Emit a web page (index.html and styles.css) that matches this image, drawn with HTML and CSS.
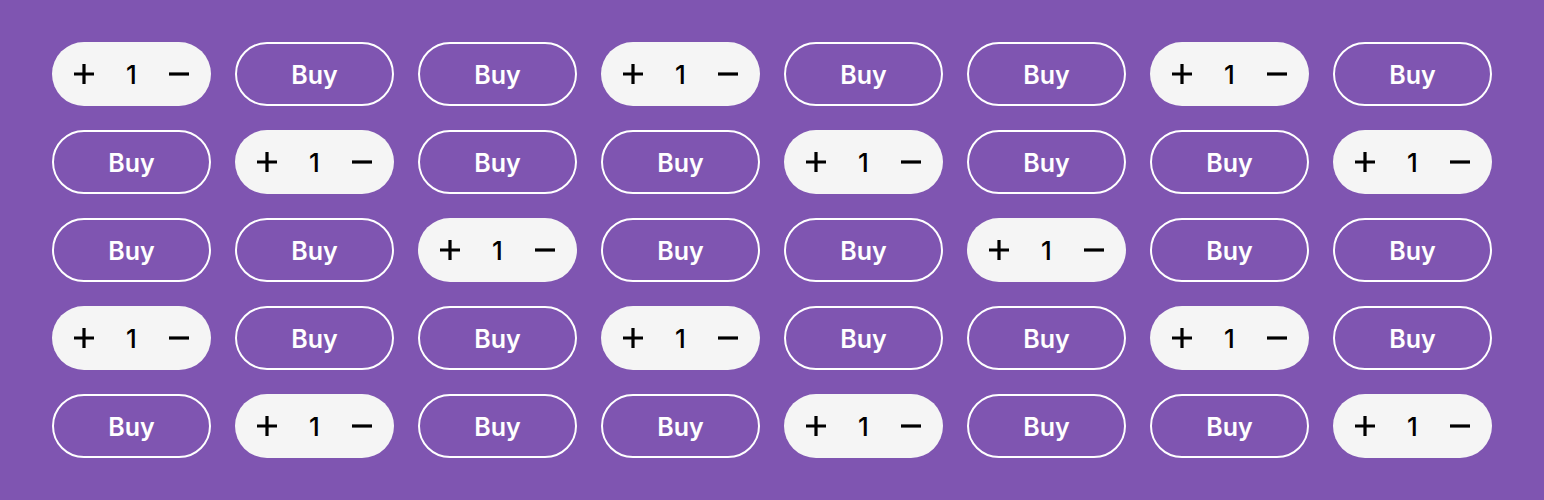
FILE: index.html
```html
<!DOCTYPE html>
<html>
<head>
<meta charset="utf-8">
<link rel="stylesheet" href="styles.css">
</head>
<body>
<div class="grid">
  <div class="qty"><svg class="ic" viewBox="0 0 22 22"><path d="M11 1v20M1 11h20"/></svg><span class="num">1</span><svg class="ic" viewBox="0 0 22 22"><path d="M1 11h20"/></svg></div>
  <button class="buy">Buy</button>
  <button class="buy">Buy</button>
  <div class="qty"><svg class="ic" viewBox="0 0 22 22"><path d="M11 1v20M1 11h20"/></svg><span class="num">1</span><svg class="ic" viewBox="0 0 22 22"><path d="M1 11h20"/></svg></div>
  <button class="buy">Buy</button>
  <button class="buy">Buy</button>
  <div class="qty"><svg class="ic" viewBox="0 0 22 22"><path d="M11 1v20M1 11h20"/></svg><span class="num">1</span><svg class="ic" viewBox="0 0 22 22"><path d="M1 11h20"/></svg></div>
  <button class="buy">Buy</button>

  <button class="buy">Buy</button>
  <div class="qty"><svg class="ic" viewBox="0 0 22 22"><path d="M11 1v20M1 11h20"/></svg><span class="num">1</span><svg class="ic" viewBox="0 0 22 22"><path d="M1 11h20"/></svg></div>
  <button class="buy">Buy</button>
  <button class="buy">Buy</button>
  <div class="qty"><svg class="ic" viewBox="0 0 22 22"><path d="M11 1v20M1 11h20"/></svg><span class="num">1</span><svg class="ic" viewBox="0 0 22 22"><path d="M1 11h20"/></svg></div>
  <button class="buy">Buy</button>
  <button class="buy">Buy</button>
  <div class="qty"><svg class="ic" viewBox="0 0 22 22"><path d="M11 1v20M1 11h20"/></svg><span class="num">1</span><svg class="ic" viewBox="0 0 22 22"><path d="M1 11h20"/></svg></div>

  <button class="buy">Buy</button>
  <button class="buy">Buy</button>
  <div class="qty"><svg class="ic" viewBox="0 0 22 22"><path d="M11 1v20M1 11h20"/></svg><span class="num">1</span><svg class="ic" viewBox="0 0 22 22"><path d="M1 11h20"/></svg></div>
  <button class="buy">Buy</button>
  <button class="buy">Buy</button>
  <div class="qty"><svg class="ic" viewBox="0 0 22 22"><path d="M11 1v20M1 11h20"/></svg><span class="num">1</span><svg class="ic" viewBox="0 0 22 22"><path d="M1 11h20"/></svg></div>
  <button class="buy">Buy</button>
  <button class="buy">Buy</button>

  <div class="qty"><svg class="ic" viewBox="0 0 22 22"><path d="M11 1v20M1 11h20"/></svg><span class="num">1</span><svg class="ic" viewBox="0 0 22 22"><path d="M1 11h20"/></svg></div>
  <button class="buy">Buy</button>
  <button class="buy">Buy</button>
  <div class="qty"><svg class="ic" viewBox="0 0 22 22"><path d="M11 1v20M1 11h20"/></svg><span class="num">1</span><svg class="ic" viewBox="0 0 22 22"><path d="M1 11h20"/></svg></div>
  <button class="buy">Buy</button>
  <button class="buy">Buy</button>
  <div class="qty"><svg class="ic" viewBox="0 0 22 22"><path d="M11 1v20M1 11h20"/></svg><span class="num">1</span><svg class="ic" viewBox="0 0 22 22"><path d="M1 11h20"/></svg></div>
  <button class="buy">Buy</button>

  <button class="buy">Buy</button>
  <div class="qty"><svg class="ic" viewBox="0 0 22 22"><path d="M11 1v20M1 11h20"/></svg><span class="num">1</span><svg class="ic" viewBox="0 0 22 22"><path d="M1 11h20"/></svg></div>
  <button class="buy">Buy</button>
  <button class="buy">Buy</button>
  <div class="qty"><svg class="ic" viewBox="0 0 22 22"><path d="M11 1v20M1 11h20"/></svg><span class="num">1</span><svg class="ic" viewBox="0 0 22 22"><path d="M1 11h20"/></svg></div>
  <button class="buy">Buy</button>
  <button class="buy">Buy</button>
  <div class="qty"><svg class="ic" viewBox="0 0 22 22"><path d="M11 1v20M1 11h20"/></svg><span class="num">1</span><svg class="ic" viewBox="0 0 22 22"><path d="M1 11h20"/></svg></div>
</div>
</body>
</html>
```
FILE: styles.css
```css
html, body {
  margin: 0;
  padding: 0;
  background: #7f55b1;
}
body {
  font-family: Inter, "Noto Sans", sans-serif;
}
.grid {
  display: grid;
  grid-template-columns: repeat(8, 159px);
  grid-auto-rows: 64px;
  gap: 24px;
  padding: 42px 52px;
}
.qty {
  box-sizing: border-box;
  background: #f5f5f5;
  border-radius: 32px;
  display: flex;
  align-items: center;
  justify-content: space-between;
  padding: 0 21px;
  color: #000;
}
.ic {
  width: 22px;
  height: 22px;
  fill: none;
  stroke: #000;
  stroke-width: 3.2;
}
.num {
  font-size: 26px;
  font-weight: 500;
  line-height: 1;
  padding-top: 1px;
}
.buy {
  box-sizing: border-box;
  background: transparent;
  border: 2px solid #fff;
  border-radius: 32px;
  color: #fff;
  font-family: Inter, "Noto Sans", sans-serif;
  font-size: 25px;
  font-weight: 600;
  padding: 2px 0 0;
  margin: 0;
}
```
